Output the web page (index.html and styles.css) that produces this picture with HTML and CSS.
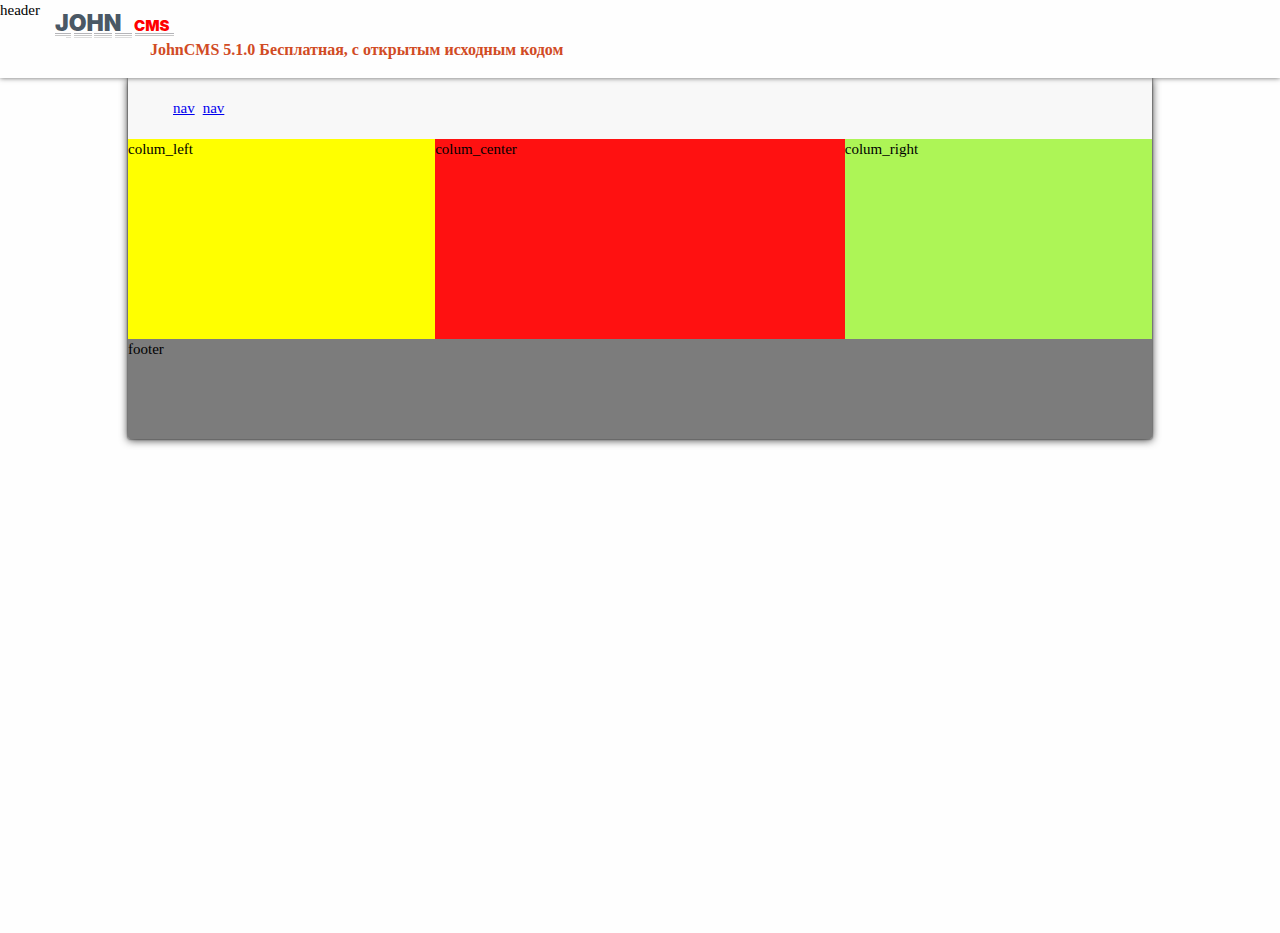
FILE: index.html
```html
<!DOCTYPE html>
<html lang="ru">
<head>
    <meta charset="UTF-8">
    <meta name="viewport" content="width=device-width, initial-scale=1.0">
    <title>JohnCMS</title>
    <link rel="stylesheet" href="styles.css">
</head>
<body>
    <header class="header">
        <span class="header-label">header</span>
        <div class="brand">
            <svg class="logo" width="122" height="26" viewBox="0 0 122 26" role="img" aria-label="JohnCMS">
                <text class="logo-john" x="0" y="17">JOHN</text>
                <text class="logo-cms" x="79" y="17">CMS</text>
                <!-- reflection -->
                <g fill="none" stroke-width="1">
                    <path stroke="#b4b4b8" d="M0 19.5h16M19 19.5h18M39 19.5h18M60 19.5h17M80 19.5h39"/>
                    <path stroke="#c8c8c8" d="M0 21.5h16M19 21.5h18M39 21.5h18M60 21.5h17M80 21.5h39"/>
                    <path stroke="#dcdcdc" d="M11 23.5h5M19 23.5h18M39 23.5h18M60 23.5h17"/>
                </g>
            </svg>
            <h1 class="slogan">JohnCMS 5.1.0 Бесплатная, с открытым исходным кодом</h1>
        </div>
    </header>

    <div class="container">
        <nav>
            <ul class="nav">
                <li><a href="#">nav</a></li>
                <li><a href="#">nav</a></li>
            </ul>
        </nav>
        <main class="columns">
            <section class="colum-left">colum_left</section>
            <section class="colum-center">colum_center</section>
            <section class="colum-right">colum_right</section>
        </main>
        <footer class="footer">footer</footer>
    </div>
</body>
</html>
```

FILE: styles.css
```css
* {
    margin: 0;
    padding: 0;
    box-sizing: border-box;
}

body {
    min-height: 100vh;
    font-family: "Liberation Serif", "Times New Roman", serif;
    font-size: 15px;
    line-height: 20px;
    color: #000;
    background: #fefefe;
}

.header {
    position: sticky;
    top: 0;
    z-index: 10;
    display: flex;
    gap: 15px;
    min-height: 78px;
    background: #fefefe;
    box-shadow: 0 0 5px rgba(0, 0, 0, 0.6);
}

.brand {
    padding: 14px 0 17px;
}

.logo {
    display: block;
    overflow: visible;
}

.logo-john,
.logo-cms {
    font-family: Inter, sans-serif;
    font-weight: 900;
}

.logo-john {
    font-size: 23px;
    fill: #4a5865;
}

.logo-cms {
    font-size: 15px;
    fill: #f00;
}

.slogan {
    margin-left: 95px;
    font-size: 16px;
    color: #d14b24;
}

.container {
    width: 80%;
    margin: 0 auto;
    border-radius: 0 0 2px 2px;
    background: #f8f8f8;
    box-shadow: 0 0 2px #000, 0 1px 8px rgba(0, 0, 0, 0.8);
}

.nav {
    display: flex;
    gap: 8px;
    padding: 20px 45px 21px;
    list-style: none;
}

.nav a {
    color: #00e;
}

.columns {
    display: grid;
    grid-template-columns: 3fr 4fr 3fr;
    min-height: 200px;
}

.colum-left {
    background: #ff0;
}

.colum-center {
    background: #f11;
}

.colum-right {
    background: #adf556;
}

.footer {
    min-height: 100px;
    border-radius: 0 0 2px 2px;
    background: #7c7c7c;
}
```
